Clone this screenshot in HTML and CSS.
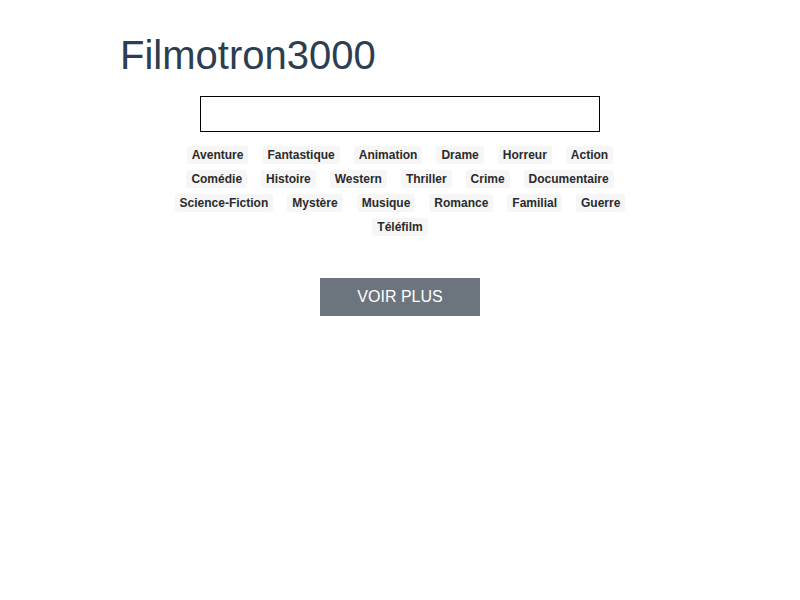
FILE: index.html
```html
<!DOCTYPE html>
<html lang="fr">
<head>
<meta charset="utf-8">
<title>Filmotron3000</title>
<link rel="stylesheet" href="styles.css">
</head>
<body>
<div class="app">
  <h1 class="title">Filmotron3000</h1>
  <div class="search-row">
    <input class="search" type="text">
  </div>
  <div class="genres">
    <span class="tag">Aventure</span>
    <span class="tag">Fantastique</span>
    <span class="tag">Animation</span>
    <span class="tag">Drame</span>
    <span class="tag">Horreur</span>
    <span class="tag">Action</span>
    <span class="tag">Comédie</span>
    <span class="tag">Histoire</span>
    <span class="tag">Western</span>
    <span class="tag">Thriller</span>
    <span class="tag">Crime</span>
    <span class="tag">Documentaire</span>
    <span class="tag">Science-Fiction</span>
    <span class="tag">Mystère</span>
    <span class="tag">Musique</span>
    <span class="tag">Romance</span>
    <span class="tag">Familial</span>
    <span class="tag">Guerre</span>
    <span class="tag">Téléfilm</span>
  </div>
  <div class="more-row">
    <button class="more" type="button">VOIR PLUS</button>
  </div>
</div>
</body>
</html>
```
FILE: styles.css
```css
html, body {
  margin: 0;
  padding: 0;
  background: #ffffff;
}

body {
  font-family: "Liberation Sans", Arial, sans-serif;
}

.app {
  width: 800px;
}

.title {
  margin: 0;
  padding: 32px 0 0 120px;
  font-size: 40px;
  line-height: 46px;
  font-weight: 400;
  color: #2c3e50;
}

.search-row {
  display: flex;
  justify-content: center;
  margin-top: 18px;
}

.search {
  box-sizing: border-box;
  width: 400px;
  height: 36px;
  border: 1px solid #000000;
  border-radius: 0;
  padding: 0 8px;
  margin: 0;
  font-family: inherit;
  font-size: 14px;
  outline: none;
}

.genres {
  width: 480px;
  margin: 11px auto 0;
  display: flex;
  flex-wrap: wrap;
  justify-content: center;
}

.tag {
  margin: 3px 7px;
  padding: 0 5px;
  height: 18px;
  line-height: 18px;
  font-size: 12px;
  font-weight: 700;
  color: #2b2b2b;
  background: #f6f6f7;
  border-radius: 3px;
}

.more-row {
  display: flex;
  justify-content: center;
  margin-top: 39px;
}

.more {
  width: 160px;
  height: 38px;
  border: none;
  border-radius: 0;
  background: #6c757d;
  color: #ffffff;
  font-family: inherit;
  font-size: 16px;
  padding: 0;
  cursor: pointer;
}
```
